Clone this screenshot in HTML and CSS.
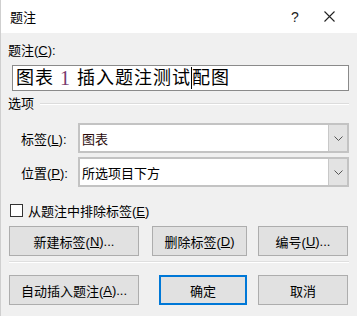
FILE: index.html
```html
<!DOCTYPE html>
<html lang="zh-CN">
<head>
<meta charset="utf-8">
<title>题注</title>
<link rel="stylesheet" href="styles.css">
</head>
<body>
<div class="dialog">
  <div class="titlebar">
    <span class="title">题注</span>
    <span class="help">?</span>
    <span class="close"><svg width="11" height="11" viewBox="0 0 11 11"><path d="M0.5 0.5 L10.5 10.5 M10.5 0.5 L0.5 10.5" stroke="#222" stroke-width="1.1" fill="none"/></svg></span>
  </div>
  <div class="content">
    <div class="label-line">题注(<u>C</u>):</div>
    <div class="textbox"><span>图表</span><span class="num">1</span><span>插入题注测试</span><span class="caret"></span><span>配图</span></div>
    <div class="group-head"><span>选项</span><span class="group-rule"></span></div>
    <div class="field-row">
      <span class="field-label">标签(<u>L</u>):</span>
      <div class="combo"><span class="combo-value dark-red">图表</span><span class="combo-btn"><svg width="9" height="5" viewBox="0 0 9 5"><path d="M0.5 0.5 L4.5 4.5 L8.5 0.5" stroke="#555" stroke-width="1" fill="none"/></svg></span></div>
    </div>
    <div class="field-row second">
      <span class="field-label">位置(<u>P</u>):</span>
      <div class="combo"><span class="combo-value">所选项目下方</span><span class="combo-btn"><svg width="9" height="5" viewBox="0 0 9 5"><path d="M0.5 0.5 L4.5 4.5 L8.5 0.5" stroke="#555" stroke-width="1" fill="none"/></svg></span></div>
    </div>
    <div class="check-row"><span class="checkbox"></span><span>从题注中排除标签(<u>E</u>)</span></div>
    <div class="btn-row first">
      <span class="btn wide">新建标签(<u>N</u>)...</span>
      <span class="btn mid">删除标签(<u>D</u>)</span>
      <span class="btn narrow">编号(<u>U</u>)...</span>
    </div>
    <div class="separator"></div>
    <div class="btn-row">
      <span class="btn wide">自动插入题注(<u>A</u>)...</span>
      <span class="btn ok">确定</span>
      <span class="btn narrow">取消</span>
    </div>
  </div>
</div>
</body>
</html>
```
FILE: styles.css
```css
* { box-sizing: border-box; }
html, body { margin: 0; padding: 0; }
body {
  width: 357px;
  height: 316px;
  overflow: hidden;
  background: #e9e9e9;
  font-family: "Liberation Sans", "Noto Sans CJK SC", sans-serif;
  font-size: 13px;
  color: #000;
}
.dialog {
  width: 357px;
  height: 316px;
  background: #f0f0f0;
  border-left: 1px solid #cfcfcf;
  display: flex;
  flex-direction: column;
}
.titlebar {
  height: 33px;
  background: #fff;
  display: flex;
  align-items: center;
  padding-left: 9px;
  flex-shrink: 0;
}
.title { font-size: 13px; flex: 1; }
.help {
  font-size: 14px;
  color: #222;
  width: 9px;
  margin-right: 24px;
  font-family: "Liberation Sans", sans-serif;
}
.close { display: flex; margin-right: 22px; }
.content {
  padding: 10px 8px 0 7px;
  display: flex;
  flex-direction: column;
}
.label-line { line-height: 16px; height: 16px; }
u { text-decoration: underline; text-underline-offset: 1px; }
.textbox {
  margin-top: 6px;
  margin-left: 4px;
  height: 26px;
  background: #fff;
  border: 1px solid #8a8a8a;
  padding-left: 3px;
  font-size: 18px;
  letter-spacing: 1px;
  line-height: 24px;
  display: flex;
  align-items: center;
  white-space: pre;
}
.num { color: #7a3b6e; font-family: "Liberation Serif", serif; font-size: 20px; margin: 0 7px 0 6px; letter-spacing: 0; }
.caret { width: 1px; height: 22px; background: #000; }
.group-head {
  margin-top: 5px;
  height: 16px;
  line-height: 16px;
  display: flex;
  align-items: center;
}
.group-rule {
  flex: 1;
  margin-left: 6px;
  height: 2px;
  border-top: 1px solid #dcdcdc;
  border-bottom: 1px solid #fff;
}
.field-row {
  margin-top: 11px;
  display: flex;
  align-items: center;
  padding-left: 13px;
}
.field-row.second { margin-top: 4px; }
.field-label { width: 57px; }
.combo {
  flex: 1;
  height: 30px;
  border: 2px solid #c3c3c3;
  background: #fff;
  display: flex;
  align-items: stretch;
}
.combo-value { flex: 1; padding-left: 2px; display: flex; align-items: center; }
.dark-red { color: #2a0a0a; }
.combo-btn {
  width: 19px;
  background: #e3e3e3;
  border-left: 1px solid #c8c8c8;
  display: flex;
  align-items: center;
  justify-content: center;
}
.check-row {
  margin-top: 15px;
  height: 16px;
  display: flex;
  align-items: center;
  padding-left: 2px;
}
.checkbox {
  width: 13px;
  height: 13px;
  border: 1px solid #333;
  background: #fff;
  margin-right: 5px;
}
.btn-row {
  display: flex;
  margin-top: 12px;
  padding-left: 1px;
}
.btn-row.first { margin-top: 8px; }
.btn {
  height: 30px;
  background: #e1e1e1;
  border: 1px solid #adadad;
  display: flex;
  align-items: center;
  justify-content: center;
}
.btn.wide { width: 130px; }
.btn.mid { width: 95px; margin-left: 13px; }
.btn.narrow { width: 90px; margin-left: 11px; }
.btn.ok { width: 88px; margin-left: 20px; border: 2px solid #0078d7; }
.separator {
  margin-top: 5px;
  margin-left: 1px;
  height: 2px;
  border-top: 1px solid #dfdfdf;
  border-bottom: 1px solid #fff;
}
```
